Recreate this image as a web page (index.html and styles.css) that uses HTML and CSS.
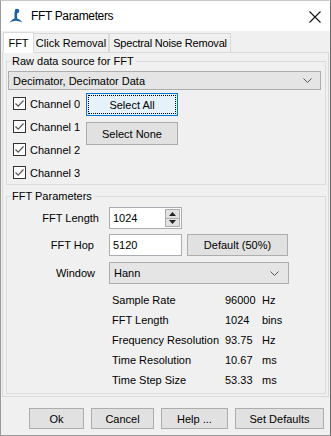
FILE: index.html
```html
<!DOCTYPE html>
<html>
<head>
<meta charset="utf-8">
<title>FFT Parameters</title>
<link rel="stylesheet" href="styles.css">
</head>
<body>
<div class="window">
  <div class="titlebar">
    <svg class="app-icon" width="14" height="16" viewBox="0 0 14 16">
      <circle cx="8" cy="3" r="2.3" fill="#1f5fa8"/>
      <rect x="5.5" y="4" width="2.6" height="7" fill="#1f5fa8"/>
      <path d="M0.5 14.5 Q4 10 6.8 10.5 Q10 10 13.5 14.5 Q10 12.8 6.8 12.8 Q4 12.8 0.5 14.5 Z" fill="#1f5fa8"/>
    </svg>
    <span class="title">FFT Parameters</span>
    <svg class="close" width="12" height="12" viewBox="0 0 12 12">
      <path d="M0.5 0.5 L11.5 11.5 M11.5 0.5 L0.5 11.5" stroke="#111" stroke-width="1.1"/>
    </svg>
  </div>

  <div class="content">
    <div class="tabs">
      <div class="tab active">FFT</div>
      <div class="tab tab-click">Click Removal</div>
      <div class="tab tab-noise">Spectral Noise Removal</div>
    </div>

    <div class="tab-panel">
      <fieldset class="group source">
        <legend>Raw data source for FFT</legend>
        <div class="combo wide">
          <span>Decimator, Decimator Data</span>
          <svg class="chevron" width="9" height="5" viewBox="0 0 9 5"><path d="M0.5 0.5 L4.5 4.5 L8.5 0.5" fill="none" stroke="#555" stroke-width="1"/></svg>
        </div>
        <div class="channels">
          <div class="checks">
            <label class="check"><span class="box"><svg width="11" height="11" viewBox="0 0 11 11"><path d="M1.5 5.5 L4.2 8.2 L9.5 2.5" fill="none" stroke="#555" stroke-width="1.2"/></svg></span>Channel 0</label>
            <label class="check"><span class="box"><svg width="11" height="11" viewBox="0 0 11 11"><path d="M1.5 5.5 L4.2 8.2 L9.5 2.5" fill="none" stroke="#555" stroke-width="1.2"/></svg></span>Channel 1</label>
            <label class="check"><span class="box"><svg width="11" height="11" viewBox="0 0 11 11"><path d="M1.5 5.5 L4.2 8.2 L9.5 2.5" fill="none" stroke="#555" stroke-width="1.2"/></svg></span>Channel 2</label>
            <label class="check"><span class="box"><svg width="11" height="11" viewBox="0 0 11 11"><path d="M1.5 5.5 L4.2 8.2 L9.5 2.5" fill="none" stroke="#555" stroke-width="1.2"/></svg></span>Channel 3</label>
          </div>
          <div class="select-buttons">
            <button class="btn focused">Select All</button>
            <button class="btn">Select None</button>
          </div>
        </div>
      </fieldset>

      <fieldset class="group params">
        <legend>FFT Parameters</legend>
        <div class="form">
          <span class="lbl">FFT Length</span>
          <div class="spinner">
            <span class="field-text">1024</span>
            <div class="spin">
              <span class="spin-btn"><svg width="7" height="4" viewBox="0 0 7 4"><path d="M0 4 L3.5 0 L7 4 Z" fill="#222"/></svg></span>
              <span class="spin-btn"><svg width="7" height="4" viewBox="0 0 7 4"><path d="M0 0 L3.5 4 L7 0 Z" fill="#222"/></svg></span>
            </div>
          </div>
          <span class="lbl lbl-hop">FFT Hop</span>
          <div class="hop-row">
            <div class="textfield">5120</div>
            <button class="btn default-btn">Default (50%)</button>
          </div>
          <span class="lbl lbl-window">Window</span>
          <div class="combo window-combo">
            <span>Hann</span>
            <svg class="chevron" width="9" height="5" viewBox="0 0 9 5"><path d="M0.5 0.5 L4.5 4.5 L8.5 0.5" fill="none" stroke="#555" stroke-width="1"/></svg>
          </div>
        </div>

        <div class="info">
          <span>Sample Rate</span><span>96000</span><span>Hz</span>
          <span>FFT Length</span><span>1024</span><span>bins</span>
          <span>Frequency Resolution</span><span>93.75</span><span>Hz</span>
          <span>Time Resolution</span><span>10.67</span><span>ms</span>
          <span>Time Step Size</span><span>53.33</span><span>ms</span>
        </div>
      </fieldset>
    </div>

    <div class="footer">
      <button class="btn ok">Ok</button>
      <button class="btn cancel">Cancel</button>
      <button class="btn help">Help ...</button>
      <button class="btn defaults">Set Defaults</button>
    </div>
  </div>
</div>
</body>
</html>
```

FILE: styles.css
```css
* {
  box-sizing: border-box;
}
html, body {
  margin: 0;
  padding: 0;
}
body {
  font-family: "Liberation Sans", Arial, sans-serif;
  font-size: 11px;
  color: #000;
  background: #f0f0f0;
}
.window {
  width: 331px;
  height: 436px;
  border: 1px solid #9a9a9a;
  border-right-color: #6a6a6a;
  border-top-color: #c8c8c8;
  background: #f0f0f0;
  display: flex;
  flex-direction: column;
}

/* title bar */
.titlebar {
  height: 30px;
  background: #fff;
  display: flex;
  align-items: center;
  padding-left: 8px;
}
.app-icon {
  margin-right: 8px;
  margin-top: -1px;
}
.title {
  font-size: 12px;
  letter-spacing: -0.35px;
  flex: 1;
  margin-top: -1px;
}
.close {
  margin-right: 9px;
  margin-top: 1px;
}

/* tabs */
.content {
  flex: 1;
  display: flex;
  flex-direction: column;
  padding: 0 1px 0 1px;
}
.tabs {
  display: flex;
  align-items: flex-end;
  height: 22px;
  padding-left: 1px;
  position: relative;
  z-index: 1;
  margin-bottom: -1px;
}
.tab {
  height: 19px;
  border: 1px solid #d9d9d9;
  border-bottom: none;
  background: #f0f0f0;
  text-align: center;
  line-height: 18px;
  margin-bottom: 1px;
  white-space: nowrap;
}
.tab.active {
  width: 31px;
  height: 21px;
  background: #fff;
  line-height: 20px;
  margin-bottom: 0;
  border-bottom: 1px solid #fff;
}
.tab-click {
  width: 75px;
  margin-left: 0;
  border-left: none;
}
.tab-noise {
  width: 122px;
  border-left: 1px solid #d9d9d9;
  letter-spacing: -0.2px;
}
.tab-panel {
  border: 1px solid #d9d9d9;
  padding: 2px 2px 2px 3px;
  height: 345px;
}

/* group boxes */
.group {
  margin: 0;
  border: 1px solid #dcdcdc;
  padding: 0 4px 0 1px;
  min-width: 0;
}
.group legend {
  padding: 0 2px 0 1px;
  margin-left: 3px;
  line-height: 13px;
}
.combo {
  display: flex;
  align-items: center;
  justify-content: space-between;
  border: 1px solid #adadad;
  background: #e5e5e5;
  padding: 0 8px 0 4px;
}
.combo.wide {
  height: 19px;
  margin-top: 3px;
}
.chevron {
  display: block;
}

.channels {
  display: flex;
  margin-top: 2px;
}
.checks {
  width: 78px;
  display: flex;
  flex-direction: column;
}
.check {
  height: 23px;
  display: flex;
  align-items: center;
  padding-left: 5px;
}
.box {
  width: 13px;
  height: 13px;
  border: 1px solid #333;
  background: #fff;
  margin-right: 4px;
  display: flex;
  align-items: center;
  justify-content: center;
}
.box svg {
  display: block;
}
.select-buttons {
  display: flex;
  flex-direction: column;
  gap: 6px;
  padding-top: 1px;
}
.btn {
  font-family: inherit;
  font-size: 11px;
  color: #000;
  background: #e1e1e1;
  border: 1px solid #adadad;
  padding: 0;
  margin: 0;
  height: 22px;
}
.select-buttons .btn {
  width: 92px;
  height: 23px;
}
.btn.focused {
  background: #e5f1fb;
  border-color: #0078d7;
  outline: 1px dotted #000;
  outline-offset: -3px;
}

/* FFT parameters */
.params {
  margin-top: 5px;
  padding-bottom: 3px;
}
.form {
  display: grid;
  grid-template-columns: 91px auto;
  column-gap: 10px;
  row-gap: 5px;
  align-items: center;
  margin-top: 4px;
}
.lbl {
  text-align: right;
}
.lbl-hop {
  padding-right: 5px;
}
.lbl-window {
  padding-right: 4px;
}
.spinner {
  width: 73px;
  height: 22px;
  border: 1px solid #abadb3;
  background: #fff;
  display: flex;
}
.field-text {
  flex: 1;
  line-height: 20px;
  padding-left: 3px;
}
.spin {
  width: 16px;
  display: flex;
  flex-direction: column;
  padding: 1px 1px 1px 0;
}
.spin-btn {
  flex: 1;
  border: 1px solid #adadad;
  background: #e1e1e1;
  display: flex;
  align-items: center;
  justify-content: center;
}
.spin-btn + .spin-btn {
  border-top: none;
}
.spin-btn svg {
  display: block;
}
.hop-row {
  display: flex;
  gap: 5px;
}
.textfield {
  width: 73px;
  height: 22px;
  border: 1px solid #abadb3;
  background: #fff;
  line-height: 20px;
  padding-left: 3px;
}
.default-btn {
  width: 101px;
}
.window-combo {
  width: 180px;
  height: 22px;
  margin-top: 1px;
  padding-right: 9px;
}

.info {
  display: grid;
  grid-template-columns: 113px 37px auto;
  grid-auto-rows: 20px;
  align-items: center;
  margin: 6px 0 0 104px;
}

/* bottom buttons */
.footer {
  display: flex;
  justify-content: flex-end;
  gap: 7px;
  padding: 11px 5px 0 0;
}
.footer .btn {
  height: 21px;
}
.ok { width: 55px; }
.cancel { width: 63px; }
.help { width: 67px; }
.defaults { width: 89px; }
```
